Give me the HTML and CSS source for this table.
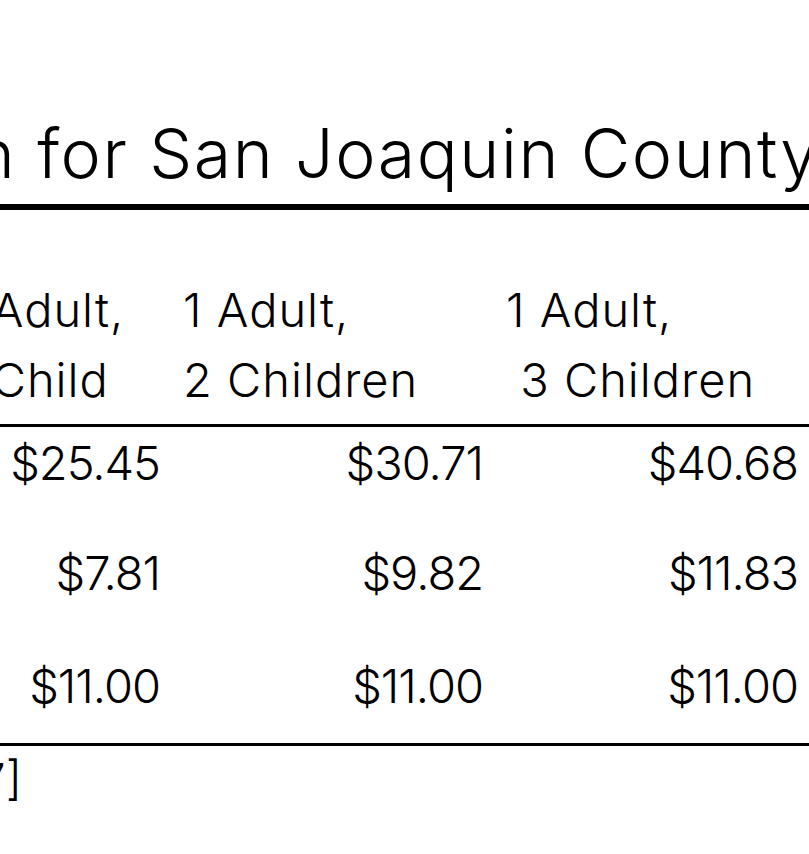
FILE: index.html
```html
<!DOCTYPE html>
<html lang="en">
<head>
<meta charset="utf-8">
<title>Living Wage Calculation for San Joaquin County</title>
<link rel="stylesheet" href="styles.css">
</head>
<body>
<div class="viewport">
  <div class="doc">
    <h2 class="title">Living Wage Calculation for San Joaquin County</h2>
    <table class="wage">
      <colgroup>
        <col class="c-label">
        <col class="c-one">
        <col class="c-child1">
        <col class="c-child2">
        <col class="c-child3">
      </colgroup>
      <thead>
        <tr>
          <th>Hourly Wages</th>
          <th>1 Adult</th>
          <th>1 Adult,<br>1 Child</th>
          <th>1 Adult,<br>2 Children</th>
          <th>1 Adult,<br>&nbsp;3 Children</th>
        </tr>
      </thead>
      <tbody>
        <tr class="r1">
          <td class="label">Living Wage</td>
          <td class="num">$13.42</td>
          <td class="num">$25.45</td>
          <td class="num">$30.71</td>
          <td class="num">$40.68</td>
        </tr>
        <tr class="r2">
          <td class="label">Poverty Wage</td>
          <td class="num">$5.80</td>
          <td class="num">$7.81</td>
          <td class="num">$9.82</td>
          <td class="num">$11.83</td>
        </tr>
        <tr class="r3">
          <td class="label">Minimum Wage</td>
          <td class="num">$11.00</td>
          <td class="num">$11.00</td>
          <td class="num">$11.00</td>
          <td class="num">$11.00</td>
        </tr>
      </tbody>
    </table>
    <p class="note">[7]</p>
  </div>
</div>
</body>
</html>
```

FILE: styles.css
```css
html, body {
  margin: 0;
  padding: 0;
  background: #ffffff;
}

body {
  font-family: Inter, "Liberation Sans", sans-serif;
  color: #000000;
  overflow: hidden;
}

.viewport {
  width: 809px;
  height: 854px;
  overflow: hidden;
}

.doc {
  width: 1583px;
  margin-left: -774px;
}

.title {
  margin: 0;
  padding: 113px 0 11px 0;
  text-indent: -4px;
  font-size: 68px;
  font-weight: 300;
  letter-spacing: 1.6px;
  line-height: 80px;
  white-space: nowrap;
  border-bottom: 6px solid #000;
}

.wage {
  width: 1583px;
  border-collapse: collapse;
  table-layout: fixed;
  font-size: 47px;
  font-weight: 300;
}

.c-label { width: 480px; }
.c-one { width: 240px; }
.c-child1 { width: 225px; }
.c-child2 { width: 323px; }
.c-child3 { width: 315px; }

.wage th {
  text-align: left;
  font-weight: 300;
  letter-spacing: 1px;
  line-height: 70px;
  padding: 65px 12px 9px 12px;
  vertical-align: top;
  border-bottom: 3px solid #000;
}

.wage td {
  line-height: 56px;
  padding: 8px 12px 46px 12px;
  vertical-align: top;
  white-space: nowrap;
}

.wage .r2 td { padding-bottom: 49px; }
.wage .r3 td { padding-bottom: 29px; }

.wage tbody tr:last-child td {
  border-bottom: 3px solid #000;
}

.wage td.num {
  text-align: right;
  letter-spacing: -1px;
  padding-right: 11px;
}

.note {
  margin: 6px 0 0 0;
  padding-left: 737px;
  font-size: 47px;
  font-weight: 300;
  line-height: 56px;
}
```
